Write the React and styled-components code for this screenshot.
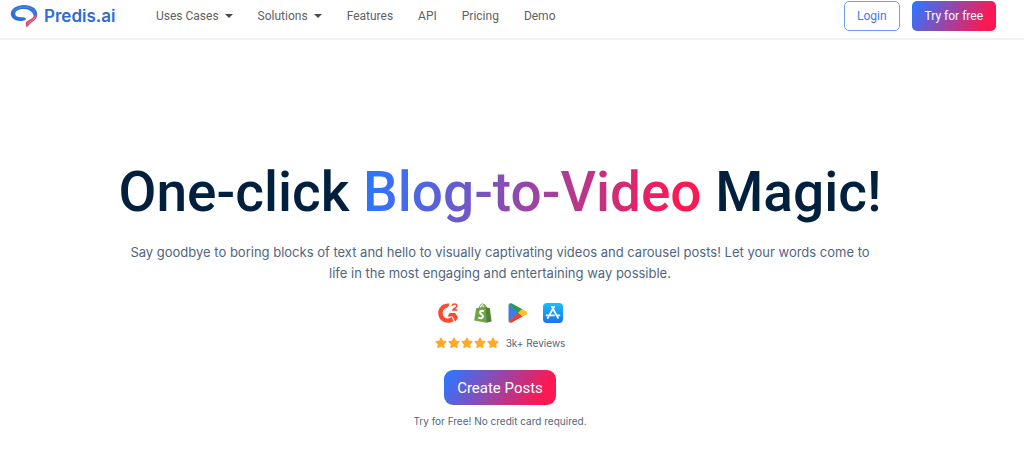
import React from 'react'
import styled, { createGlobalStyle, css } from 'styled-components'

const GlobalStyle = createGlobalStyle`
    * {
        box-sizing: border-box;
    }

    body {
        margin: 0;
        background: #FFFFFF;
        font-family: 'Inter', 'Liberation Sans', sans-serif;
    }
`

const gradient = css`
    background: linear-gradient(120deg, #3174FC 5%, #FC1853 85%);
`

const Header = styled.header`
    display: flex;
    align-items: center;
    height: 40px;
    padding: 0 28px 6px 10px;
    border-bottom: 2px solid #F2F2F2;
    font-family: 'Roboto', 'Liberation Sans', sans-serif;
`

const Brand = styled.a`
    display: flex;
    align-items: center;
    column-gap: 6px;
    width: 146px;
    font-family: 'Inter', 'Liberation Sans', sans-serif;
    font-size: 17px;
    line-height: 24px;
    font-weight: 600;
    color: #2F6BD6;
    text-decoration: none;
`

const Nav = styled.nav`
    display: flex;
    align-items: center;
    column-gap: 25px;
    flex: 1;
`

const linkText = css`
    font-family: inherit;
    font-size: 12px;
    line-height: 20px;
    color: #5F5F5F;
`

const NavLink = styled.a`
    ${linkText}
    text-decoration: none;
`

const NavToggle = styled.button`
    ${linkText}
    display: flex;
    align-items: center;
    column-gap: 6px;
    padding: 0;
    border: none;
    background: none;

    &::after {
        content: '';
        border-top: 4px solid #4A4A4A;
        border-left: 4px solid transparent;
        border-right: 4px solid transparent;
    }
`

const HeaderActions = styled.div`
    display: flex;
    align-items: center;
    column-gap: 12px;
`

const LoginButton = styled.button`
    height: 30px;
    padding: 0 12px;
    border: 1px solid #6C9DFB;
    border-radius: 5px;
    background: #FFFFFF;
    font-family: inherit;
    font-size: 12px;
    color: #3B7BF7;
`

const TrialButton = styled.button`
    ${gradient}
    height: 30px;
    padding: 0 13px;
    border: none;
    border-radius: 5px;
    font-family: inherit;
    font-size: 12px;
    color: #FFFFFF;
`

const Hero = styled.main`
    display: flex;
    flex-direction: column;
    align-items: center;
    padding: 120px 24px 24px 0;
    text-align: center;
`

const Title = styled.h1`
    margin: 0;
    font-family: 'Roboto', 'Liberation Sans', sans-serif;
    font-size: 55px;
    line-height: 64px;
    font-weight: 500;
    color: #00203D;

    span {
        background: linear-gradient(100deg, #3174FC 5%, #FC1853 92%);
        background-clip: text;
        -webkit-background-clip: text;
        color: transparent;
    }
`

const Lead = styled.p`
    max-width: 760px;
    margin: 18px 0 0;
    font-size: 13px;
    line-height: 21px;
    color: #506680;
`

const Stores = styled.div`
    display: flex;
    column-gap: 15px;
    margin-top: 19px;

    svg {
        display: block;
    }
`

const Rating = styled.div`
    display: flex;
    align-items: center;
    margin-top: 12px;
    font-size: 10px;
    line-height: 16px;
    color: #506680;
`

const Stars = styled.div`
    display: flex;
    column-gap: 1px;
    margin-right: 7px;
`

const CreateButton = styled.button`
    ${gradient}
    height: 35px;
    margin-top: 19px;
    padding: 0 13px;
    border: none;
    border-radius: 9px;
    font-family: 'Roboto', 'Liberation Sans', sans-serif;
    font-size: 15px;
    color: #FFFFFF;
`

const Note = styled.p`
    margin: 8px 0 0;
    font-size: 10px;
    line-height: 16px;
    color: #506680;
`

const Logo = () => (
    <svg width="28" height="24" viewBox="0 0 28 24" fill="none" aria-hidden="true">
        <path d="M11.5 17C5 17.4 .8 14 .8 9.8C.8 4.8 7 1 14 1C21.2 1 27.2 4.8 27.2 10C27.2 13 25.8 15.4 23 16.8C24.2 12.8 23.8 10.6 22.3 8.8C20.6 6.4 17.6 5 13.8 5C9 5 5.2 6.8 5.2 9.8C5.2 12.6 8.2 13.4 12.8 13.2C14.9 13.1 16 14.1 16 15.6C15 16.4 13.5 16.9 11.5 17Z" fill="#2F6FDC" />
        <path d="M2.8 8.8C5 4.5 10 3 14 3C19.4 3 23.4 5.2 25 9.5" stroke="#64A0F5" strokeWidth=".6" />
        <path d="M27 11C26.8 15.4 22.6 17.6 20.4 19.6C19.2 20.8 18 22.2 16.7 23.6C16 21.8 15.6 20.4 15.8 18.6C17.1 16.4 19.8 15.8 21.6 14.4C23.4 13.1 24.4 12 24.8 10.5Z" fill="#D94A73" />
        <path d="M17.5 20.3C19 17.3 24.2 16.3 25.6 12.6" stroke="#F6A3B8" strokeWidth=".6" />
    </svg>
)

const G2Icon = () => (
    <svg width="20" height="20" viewBox="0 0 20 20" fill="none" role="img" aria-label="G2">
        <path d="M11.6 .5C5.4 -.3 .2 4.2 .2 10C.2 15.5 4.6 19.8 10 19.8C12.2 19.8 14.1 19.1 15.7 17.9L13.5 14.1C12.5 15 11.3 15.5 10 15.5C7 15.5 4.7 13 4.7 10C4.7 7 7 4.6 9.8 4.5Z" fill="#FF492C" />
        <path d="M11.6 9.9H17.2L20 14.5L17.2 18.8L14.5 13.5H9.5Z" fill="#FF492C" />
        <path d="M14.1 2.8C14.4 1.5 15.4 .9 16.6 .9C18 .9 18.9 1.7 18.9 2.8C18.9 3.9 18.2 4.4 17.2 5C16 5.7 15.2 6.2 14.9 7.1H19.4" stroke="#FF492C" strokeWidth="1.5" />
    </svg>
)

const ShopifyIcon = () => (
    <svg width="20" height="20" viewBox="0 0 20 20" fill="none" role="img" aria-label="Shopify">
        <path d="M3.1 5.2L12.9 3.2L13.5 19.8L1.2 17.5Z" fill="#6FA544" />
        <path d="M12.8 3.2L14.6 4.7L16.8 5L18.6 18.6L13.3 19.8Z" fill="#4F8336" />
        <path d="M6 5.5C6.6 2.8 8 .8 9.5 .8C11 .8 11.7 2.4 11.7 4.2M8.5 4.9C9 2.7 10.4 1.4 11.4 1.7C12.5 1.9 12.8 3.1 12.8 4" stroke="#6FA544" strokeWidth="1" />
        <path d="M10.9 8.3C9.4 7.4 7 7.8 7 9.4C7 11.1 9.9 11.2 9.9 13.4C9.9 15.4 7.4 16 5.3 14.5" stroke="#FFFFFF" strokeWidth="2" />
    </svg>
)

const PlayIcon = () => (
    <svg width="20" height="20" viewBox="0 0 20 20" role="img" aria-label="Google Play">
        <path d="M.9 1.3L10.4 10L.9 18.9C.6 18.5 .5 18.1 .5 17.5V2.5C.5 2 .6 1.6 .9 1.3Z" fill="#3D7BE8" />
        <path d="M.8 1.2C1.5 0 2.8 -.1 4 .5L14.8 6.4L10.3 10.9Z" fill="#279B4F" />
        <path d="M14.1 6.1L18.4 8.5C19.6 9.3 19.6 10.7 18.4 11.5L14.1 13.9L9.8 10Z" fill="#FBC12D" />
        <path d="M10 9.7L14.6 13.6L4 19.5C2.8 20.1 1.5 20 .8 18.8Z" fill="#E54335" />
    </svg>
)

const AppStoreIcon = () => (
    <svg width="20" height="20" viewBox="0 0 20 20" fill="none" role="img" aria-label="App Store">
        <defs>
            <linearGradient id="appStoreFill" x1="0" y1="0" x2="0" y2="1">
                <stop stopColor="#18BFFB" />
                <stop offset="1" stopColor="#1E72F0" />
            </linearGradient>
        </defs>
        <rect width="20" height="20" rx="4" fill="url(#appStoreFill)" />
        <path d="M11.1 3.8L6.2 12.4M8.9 3.8L15 14.9M3.6 12.4H11.1M13.7 12.4H16.4M5.4 14.1L4.8 15.1" stroke="#FFFFFF" strokeWidth="1.8" strokeLinecap="round" />
    </svg>
)

const Star = () => (
    <svg width="12" height="12" viewBox="0 0 12 12" aria-hidden="true">
        <path d="M6 1.2L7.5 4.2L10.9 4.7L8.5 7L9 10.4L6 8.8L3 10.4L3.5 7L1.1 4.7L4.5 4.2Z" fill="#FFAA27" stroke="#FFAA27" strokeWidth="1.4" strokeLinejoin="round" />
    </svg>
)

const App = () => {
    return (
        <>
            <GlobalStyle />
            <Header>
                <Brand href="#">
                    <Logo />
                    Predis.ai
                </Brand>
                <Nav>
                    <NavToggle type="button">Uses Cases</NavToggle>
                    <NavToggle type="button">Solutions</NavToggle>
                    <NavLink href="#">Features</NavLink>
                    <NavLink href="#">API</NavLink>
                    <NavLink href="#">Pricing</NavLink>
                    <NavLink href="#">Demo</NavLink>
                </Nav>
                <HeaderActions>
                    <LoginButton type="button">Login</LoginButton>
                    <TrialButton type="button">Try for free</TrialButton>
                </HeaderActions>
            </Header>
            <Hero>
                <Title>
                    One-click <span>Blog-to-Video</span> Magic!
                </Title>
                <Lead>
                    Say goodbye to boring blocks of text and hello to visually captivating videos and
                    carousel posts! Let your words come to life in the most engaging and entertaining
                    way possible.
                </Lead>
                <Stores>
                    <G2Icon />
                    <ShopifyIcon />
                    <PlayIcon />
                    <AppStoreIcon />
                </Stores>
                <Rating>
                    <Stars>
                        {[1, 2, 3, 4, 5].map((n) => <Star key={n} />)}
                    </Stars>
                    3k+ Reviews
                </Rating>
                <CreateButton type="button">Create Posts</CreateButton>
                <Note>Try for Free! No credit card required.</Note>
            </Hero>
        </>
    )
}

export default App
